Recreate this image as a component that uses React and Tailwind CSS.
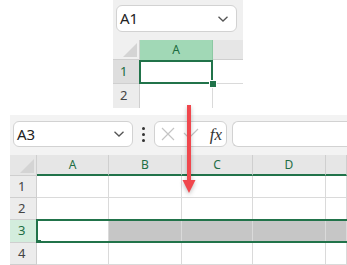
import React from "react";

const font = { fontFamily: '"Noto Sans", "Open Sans", Arial, sans-serif' };

function Chevron() {
  return (
    <svg width="12" height="8" viewBox="0 0 12 8" className="block">
      <path d="M1.5 1.8 L6 6 L10.5 1.8" fill="none" stroke="#555" strokeWidth="1.3" />
    </svg>
  );
}

function NameBox({ text, w }) {
  return (
    <div
      className={`${w} h-[27px] bg-white border border-[#d2d2d2] rounded-[6px] flex items-center justify-between pl-[3px] pr-[7px] text-[15px] text-[#222]`}
      style={font}
    >
      <span>{text}</span>
      <Chevron />
    </div>
  );
}

function Corner({ w }) {
  return (
    <div className={`${w} h-full relative border-r border-b border-[#cfcfcf]`}>
      <svg width="14" height="14" className="absolute right-[2px] bottom-[2px]">
        <polygon points="14,0 14,14 0,14" fill="#d4d4d4" />
      </svg>
    </div>
  );
}

export default function App() {
  const cols = [
    { l: "A", w: "w-[72px]" },
    { l: "B", w: "w-[73px]" },
    { l: "C", w: "w-[71px]" },
    { l: "D", w: "w-[73px]" },
    { l: "", w: "flex-1" },
  ];
  const rows = [
    { n: "1", h: "h-[22px]" },
    { n: "2", h: "h-[22px]" },
    { n: "3", h: "h-[23px]", sel: true },
    { n: "4", h: "h-[22px]" },
  ];
  return (
    <div className="relative w-[347px] h-[265px] bg-white overflow-hidden flex flex-col" style={font}>
      {/* top snippet */}
      <div className="ml-[113px] w-[130px] h-[108px] bg-[#f0f0f0] flex flex-col shrink-0">
        <div className="mt-[5px] ml-[3px]">
          <NameBox text="A1" w="w-[121px]" />
        </div>
        <div className="mt-[8px] h-[20px] flex">
          <Corner w="w-[27px]" />
          <div className="w-[73px] h-full bg-[#a1d8b6] border-r border-[#8cc9a3] flex items-center justify-center text-[12px] text-[#1b6b3e]">
            A
          </div>
          <div className="flex-1 h-full bg-[#e6e6e6] border-b border-[#cfcfcf]" />
        </div>
        <div className="flex h-[24px]">
          <div className="w-[27px] bg-[#dedede] border-r border-b border-[#cfcfcf] flex items-center pl-[7px] text-[13px] text-[#1b6b3e]">1</div>
          <div className="w-[73px] bg-white relative">
            <div className="absolute -left-[1px] top-0 w-[74px] h-[24px] border-2 border-[#21734a]" />
            <div className="absolute left-[70px] top-[21px] w-[6px] h-[6px] bg-[#21734a] border border-white box-content -ml-[1px] -mt-[1px]" />
          </div>
          <div className="flex-1 bg-white border-b border-[#dadada]" />
        </div>
        <div className="flex h-[24px]">
          <div className="w-[27px] bg-[#ececec] border-r border-[#cfcfcf] flex items-center pl-[7px] text-[13px] text-[#444]">2</div>
          <div className="w-[73px] bg-white border-r border-[#dadada]" />
          <div className="flex-1 bg-white" />
        </div>
      </div>

      {/* bottom panel */}
      <div className="mt-[7px] ml-[10px] flex-1 bg-[#f3f3f3] flex flex-col">
        <div className="h-[40px] flex items-start pt-[6px] pl-[3px] shrink-0">
          <div className="[&>div]:h-[26px]">
            <NameBox text="A3" w="w-[120px]" />
          </div>
          <div className="w-[21px] h-[26px] flex flex-col items-center justify-center gap-[3px]">
            <div className="w-[3px] h-[3px] bg-[#333] rounded-full" />
            <div className="w-[3px] h-[3px] bg-[#333] rounded-full" />
            <div className="w-[3px] h-[3px] bg-[#333] rounded-full" />
          </div>
          <div className="w-[73px] h-[26px] bg-white border border-[#d2d2d2] rounded-[6px] flex items-center pl-[6px] pr-[4px]">
            <svg width="14" height="14" viewBox="0 0 14 14" className="block">
              <path d="M1 1 L13 13 M13 1 L1 13" stroke="#c4c4c4" strokeWidth="1.2" />
            </svg>
            <svg width="16" height="12" viewBox="0 0 16 12" className="block ml-[8px]">
              <path d="M1 5 L6 10 L15 1" fill="none" stroke="#c4c4c4" strokeWidth="1.2" />
            </svg>
            <span
              className="ml-auto text-[17px] italic text-[#333] leading-none"
              style={{ fontFamily: '"Liberation Serif", "DejaVu Serif", serif' }}
            >
              fx
            </span>
          </div>
          <div className="ml-[5px] flex-1 h-[26px] bg-white border border-r-0 border-[#d2d2d2] rounded-l-[6px]" />
        </div>

        {/* header row */}
        <div className="h-[21px] flex shrink-0 bg-[#e6e6e6]">
          <Corner w="w-[27px]" />
          {cols.map((c, i) => (
            <div
              key={i}
              className={`${c.w} h-full border-r border-[#cfcfcf] border-b-2 border-b-[#21734a] flex items-center justify-center text-[12px] text-[#1e6e44]`}
            >
              {c.l}
            </div>
          ))}
        </div>

        {rows.map((r) => (
          <div key={r.n} className={`${r.h} flex relative shrink-0`}>
            <div
              className={`w-[27px] h-full border-r border-b border-[#cfcfcf] flex items-center pl-[8px] text-[13px] ${
                r.sel ? "bg-[#d3eddd] text-[#1e6e44]" : "bg-[#ececec] text-[#444]"
              }`}
            >
              {r.n}
            </div>
            {cols.map((c, i) => (
              <div
                key={i}
                className={`${c.w} h-full border-r border-b border-[#dadada] ${
                  r.sel && i > 0 ? "bg-[#c6c6c6]" : "bg-white"
                }`}
              />
            ))}
            {r.sel && (
              <>
                <div className="absolute left-[26px] -top-[1px] right-[-4px] bottom-0 border-2 border-[#21734a]" />
                <div className="absolute left-[26px] bottom-[-2px] w-[5px] h-[5px] bg-[#21734a]" />
              </>
            )}
          </div>
        ))}
      </div>

      {/* red arrow overlay */}
      <svg
        width="20"
        height="95"
        viewBox="0 0 20 95"
        className="absolute left-[179px] top-[102px]"
        style={{ filter: "drop-shadow(0 2px 2px rgba(0,0,0,0.25))" }}
      >
        <rect x="8" y="3" width="4" height="78" fill="#f0474d" />
        <polygon points="3.5,78 16.5,78 10,91" fill="#f0474d" />
      </svg>
    </div>
  );
}
